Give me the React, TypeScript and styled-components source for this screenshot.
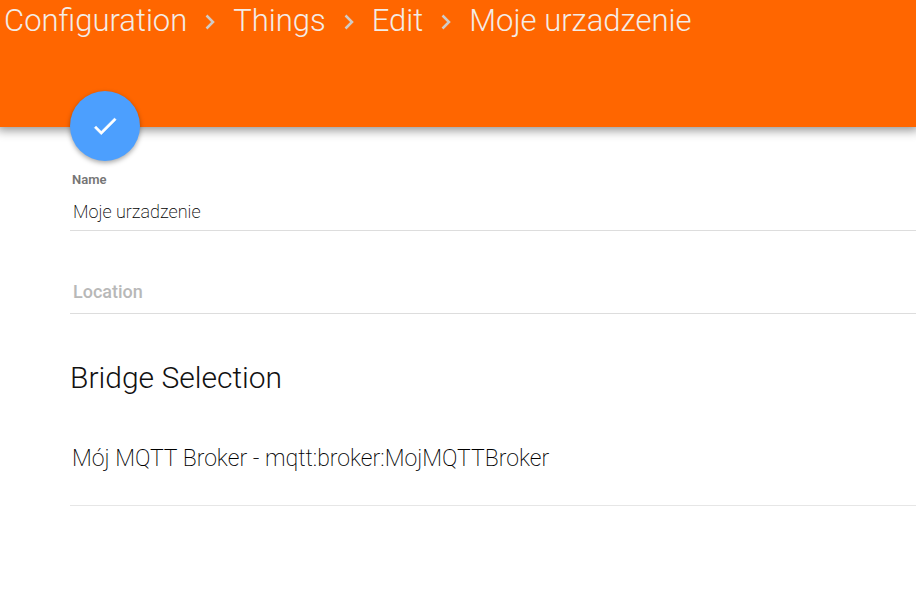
import React, { useState } from 'react';
import styled, { createGlobalStyle } from 'styled-components';

const GlobalStyle = createGlobalStyle`
  *, *::before, *::after { box-sizing: border-box; }
  body {
    margin: 0;
    background: #fff;
    color: #111;
    font-family: Roboto, "Open Sans", sans-serif;
    font-weight: 300;
    overflow-x: hidden;
  }
`;

const Header = styled.header`
  height: 127px;
  background: #ff6600;
  box-shadow: 0 0 10px 3px rgba(0, 0, 0, 0.45);
`;

const Breadcrumbs = styled.ol`
  display: flex;
  align-items: center;
  margin: 0;
  padding: 0 4px;
  list-style: none;
  font-size: 31px;
  line-height: 42px;
  white-space: nowrap;
`;

const Crumb = styled.li`
  display: flex;
  align-items: center;
`;

const CrumbLink = styled.a`
  color: #f3ece7;
  text-decoration: none;
`;

const Separator = styled.svg`
  width: 46px;
  height: 24px;
  fill: none;
  stroke: #d0cbc7;
  stroke-width: 2.5;
`;

const Form = styled.form`
  display: flex;
  flex-direction: column;
  margin-top: -36px;
  padding-left: 70px;
`;

const SaveButton = styled.button`
  display: flex;
  align-items: center;
  justify-content: center;
  width: 70px;
  height: 70px;
  padding: 0;
  border: 0;
  border-radius: 50%;
  background: #4c9ffe;
  color: #fff;
  box-shadow: 0 2px 5px rgba(0, 0, 0, 0.35);
  cursor: pointer;
`;

const Field = styled.div`
  display: flex;
  flex-direction: column;
  padding-top: 10px;
  border-bottom: 1px solid #ddd;
`;

const FieldLabel = styled.label`
  padding-left: 2px;
  color: #757575;
  font-size: 13px;
  font-weight: 600;
  line-height: 18px;
`;

const TextInput = styled.input`
  width: 100%;
  height: 41px;
  padding: 4px 3px 0;
  border: 0;
  outline: 0;
  background: transparent;
  color: #000;
  font: 200 18px Roboto, sans-serif;
  &::placeholder { color: #b8b8b8; font-weight: 500; opacity: 1; }
`;

const SectionTitle = styled.h2`
  margin: 42px 0 0;
  font-size: 30px;
  font-weight: 300;
  line-height: 44px;
`;

const BridgeSelect = styled.select`
  width: 100%;
  height: 106px;
  padding: 12px 2px 0;
  border: 0;
  border-bottom: 1px solid #e6e6e6;
  border-radius: 0;
  outline: 0;
  appearance: none;
  background: transparent;
  color: #000;
  font: 200 23px Roboto, sans-serif;
`;

const LocationField = styled(Field)`
  margin-top: 28px;
  padding-bottom: 3px;
`;

const crumbs = ['Configuration', 'Things', 'Edit', 'Moje urzadzenie'];

export default function App() {
  const [name, setName] = useState('Moje urzadzenie');
  const [location, setLocation] = useState('');
  return (
    <>
      <GlobalStyle />
      <Header>
        <nav aria-label="Breadcrumb">
          <Breadcrumbs>
            {crumbs.map((crumb, index) => (
              <Crumb key={crumb}>
                {index > 0 && (
                  <Separator viewBox="0 0 46 24" aria-hidden="true">
                    <path d="M19.5 6.5l6.5 6.5-6.5 6.5" />
                  </Separator>
                )}
                <CrumbLink href="#">{crumb}</CrumbLink>
              </Crumb>
            ))}
          </Breadcrumbs>
        </nav>
      </Header>
      <Form onSubmit={(event) => event.preventDefault()}>
        <SaveButton type="submit" aria-label="Save">
          <svg width="30" height="30" viewBox="0 0 24 24" fill="currentColor" stroke="currentColor" strokeWidth="0.3" aria-hidden="true">
            <path d="M9 16.17L4.83 12l-1.42 1.41L9 19 21 7l-1.41-1.41z" />
          </svg>
        </SaveButton>
        <Field>
          <FieldLabel htmlFor="name">Name</FieldLabel>
          <TextInput id="name" value={name} onChange={(event) => setName(event.target.value)} />
        </Field>
        <LocationField>
          <TextInput
            aria-label="Location"
            placeholder="Location"
            value={location}
            onChange={(event) => setLocation(event.target.value)}
          />
        </LocationField>
        <SectionTitle id="bridge-title">Bridge Selection</SectionTitle>
        <BridgeSelect aria-labelledby="bridge-title">
          <option>Mój MQTT Broker - mqtt:broker:MojMQTTBroker</option>
        </BridgeSelect>
      </Form>
    </>
  );
}
